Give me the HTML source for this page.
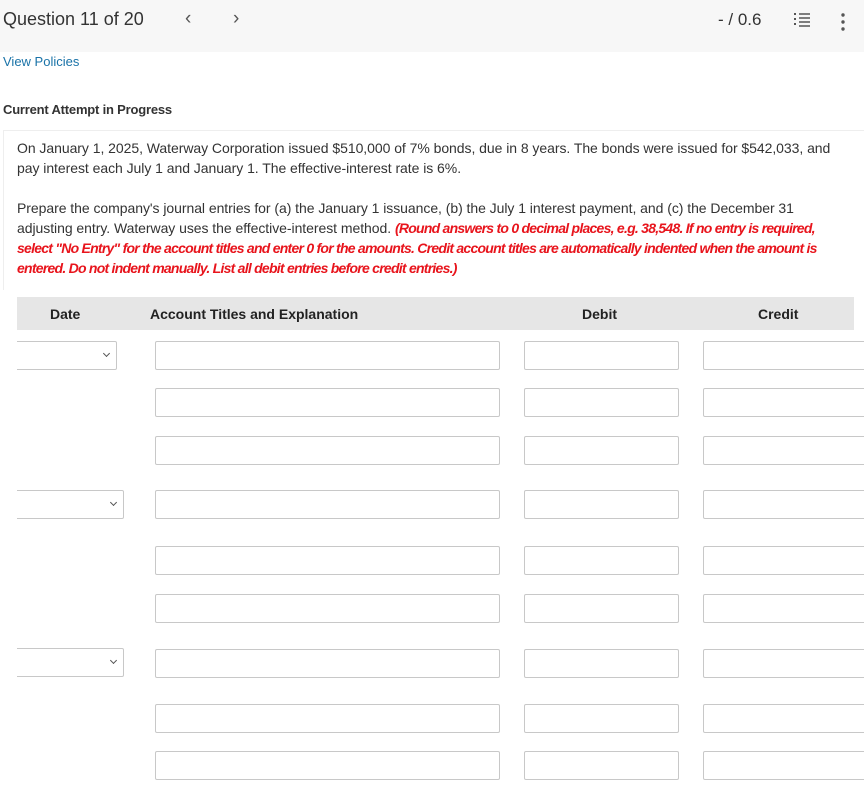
<!DOCTYPE html>
<html><head><style>
body{margin:0;width:864px;height:794px;overflow:hidden;background:#fff;font-family:"Liberation Sans",sans-serif;color:#333;position:relative}
.top{position:absolute;left:0;top:0;width:864px;height:52px;background:#f7f7f7}
.abs{position:absolute;white-space:nowrap}
.p{font-size:14px;letter-spacing:-0.05px;line-height:20px}
.r{color:#e8141c;font-weight:bold;font-style:italic;letter-spacing:-0.75px}
.hdr{position:absolute;left:17px;top:297px;width:837px;height:33px;background:#e6e6e6}
.hdr span{position:absolute;top:9px;font-weight:bold;font-size:14px;color:#222}
.in{position:absolute;height:27px;border:1px solid #c8c8c8;border-radius:2px;background:#fff;box-sizing:border-box}
.sel{position:absolute;left:17px;height:29px;border:1px solid #c8c8c8;border-left:none;border-radius:0 2px 2px 0;box-sizing:border-box}
.sel:after{content:"";position:absolute;right:7px;top:9px;width:4px;height:4px;border-right:1.5px solid #555;border-bottom:1.5px solid #555;transform:rotate(45deg)}
</style></head><body>
<div class="top"></div>
<div class="abs" style="left:3px;top:9px;font-size:18px;color:#333">Question 11 of 20</div>
<div class="abs" style="left:185px;top:8px;font-size:19px;color:#555">&lsaquo;</div>
<div class="abs" style="left:233px;top:8px;font-size:19px;color:#555">&rsaquo;</div>
<div class="abs" style="left:718px;top:10px;font-size:17px;color:#333">- / 0.6</div>
<svg class="abs" style="left:793px;top:12px" width="18" height="16"><g stroke="#555" stroke-width="1.5"><line x1="6" y1="2" x2="17" y2="2"/><line x1="6" y1="6" x2="17" y2="6"/><line x1="6" y1="10" x2="17" y2="10"/><line x1="6" y1="14" x2="17" y2="14"/></g><g fill="#555"><rect x="1" y="1" width="2" height="2"/><rect x="1" y="6" width="2" height="2"/><rect x="1" y="11" width="2" height="2"/></g></svg>
<svg class="abs" style="left:840px;top:12px" width="6" height="20"><circle cx="3" cy="3" r="1.7" fill="#555"/><circle cx="3" cy="10" r="1.7" fill="#555"/><circle cx="3" cy="17" r="1.7" fill="#555"/></svg>
<div class="abs" style="left:3px;top:54px;font-size:13px;color:#1a73a8">View Policies</div>
<div class="abs" style="left:3px;top:102px;font-size:13px;font-weight:bold;color:#333;letter-spacing:-0.2px">Current Attempt in Progress</div>
<div class="abs" style="left:3px;top:130px;width:861px;height:1px;background:#eee"></div>
<div class="abs" style="left:3px;top:130px;width:1px;height:160px;background:#eee"></div>
<div class="abs p" style="left:17px;top:138px">On January 1, 2025, Waterway Corporation issued $510,000 of 7% bonds, due in 8 years. The bonds were issued for $542,033, and<br>pay interest each July 1 and January 1. The effective-interest rate is 6%.</div>
<div class="abs p" style="left:17px;top:198px">Prepare the company's journal entries for (a) the January 1 issuance, (b) the July 1 interest payment, and (c) the December 31<br>adjusting entry. Waterway uses the effective-interest method. <span class="r">(Round answers to 0 decimal places, e.g. 38,548. If no entry is required,</span><br><span class="r">select "No Entry" for the account titles and enter 0 for the amounts. Credit account titles are automatically indented when the amount is</span><br><span class="r">entered. Do not indent manually. List all debit entries before credit entries.)</span></div>
<div class="hdr"><span style="left:33px">Date</span><span style="left:133px">Account Titles and Explanation</span><span style="left:565px">Debit</span><span style="left:741px">Credit</span></div>
<div class="sel" style="top:341px;width:100px"></div>
<div class="sel" style="top:490px;width:107px"></div>
<div class="sel" style="top:648px;width:107px"></div>
<div id="rows"></div>
<script>
var ys=[341,388,436,490,546,594,649,704,751],h='';
ys.forEach(function(y){h+='<div class="in" style="left:155px;top:'+y+'px;width:345px;height:29px"></div><div class="in" style="left:524px;top:'+y+'px;width:155px;height:29px"></div><div class="in" style="left:703px;top:'+y+'px;width:165px;height:29px"></div>';});
document.getElementById('rows').innerHTML=h;
</script>
</body></html>
